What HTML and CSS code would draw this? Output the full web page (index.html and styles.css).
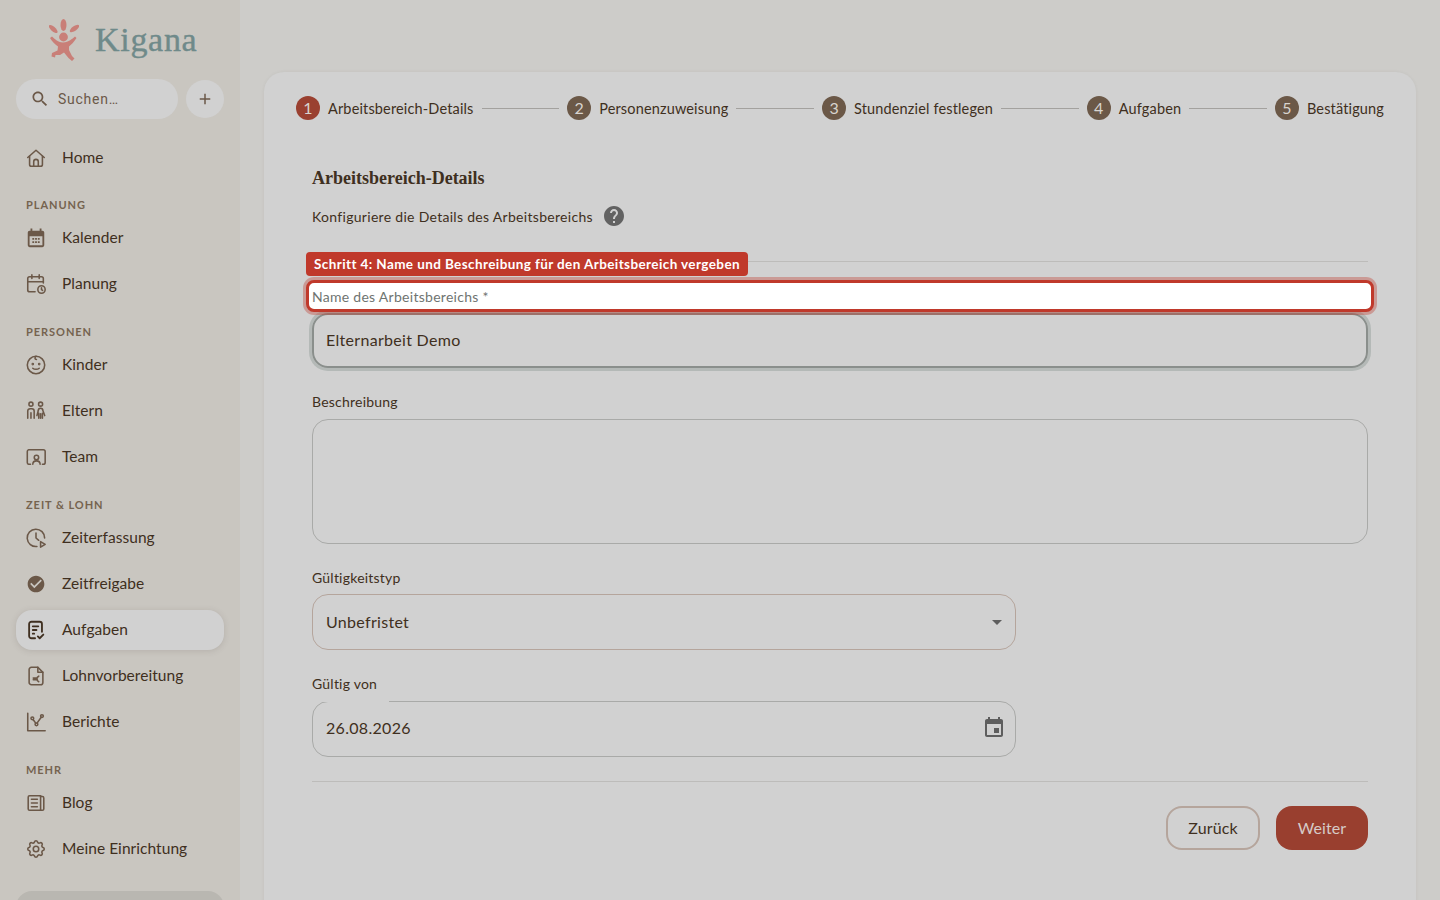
FILE: index.html
```html
<!DOCTYPE html>
<html lang="de">
<head>
<meta charset="utf-8">
<title>Kigana</title>
<link rel="stylesheet" href="styles.css">
</head>
<body>
<div class="app">
  <aside class="sidebar">
    <div class="brand">
      <svg class="brand-mark" viewBox="0 0 30 42" fill="#c97f78">
        <ellipse cx="14.500" cy="6" rx="3" ry="6"/>
        <ellipse cx="4.200" cy="10" rx="2.300" ry="5.500" transform="rotate(-48 4.200 10)"/>
        <ellipse cx="25.500" cy="9.500" rx="2.300" ry="5.500" transform="rotate(55 25.500 9.500)"/>
        <circle cx="14.500" cy="18" r="4.400"/>
        <path d="M1 19 3 17.500 C6 20 8 23 14 23.500 C20 23 23 20 26 17.500 L27.500 19 C25 23 22 26 20 27.500 L20 31 L23 37 L25.500 39.500 L23 42 L19.500 39 L15 33.500 L11 36 L6.500 36 L6 38.500 L2.500 37.500 L3 34 L8.500 31.500 L9 27.500 C6 25.500 3 22.500 1 19Z"/>
      </svg>
      <span class="brand-name">Kigana</span>
    </div>
    <div class="search-row">
      <div class="search">
        <svg class="search-icon" viewBox="0 0 24 24"><path d="M15.5 14h-.79l-.28-.27C15.41 12.59 16 11.11 16 9.5 16 5.91 13.09 3 9.5 3S3 5.91 3 9.5 5.91 16 9.5 16c1.61 0 3.09-.59 4.23-1.57l.27.28v.79l5 4.99L20.49 19l-4.99-5zm-6 0C7.01 14 5 11.99 5 9.5S7.01 5 9.5 5 14 7.01 14 9.5 11.99 14 9.5 14z"/></svg>
        <span class="search-text">Suchen…</span>
      </div>
      <button class="add-btn" type="button"><svg viewBox="0 0 24 24"><path d="M19 13h-6v6h-2v-6H5v-2h6V5h2v6h6v2z"/></svg></button>
    </div>
    <nav class="nav">
      <a class="nav-item"><svg class="nav-icon line" viewBox="0 0 24 24"><path d="M3 11.5 12 3.5l9 8"/><path d="M5 10v9a2 2 0 0 0 2 2h10a2 2 0 0 0 2-2v-9"/><path d="M9.5 21v-5a2.5 2.5 0 0 1 5 0v5"/></svg><span>Home</span></a>

      <div class="nav-label first">PLANUNG</div>
      <a class="nav-item"><svg class="nav-icon" viewBox="0 0 24 24"><path d="M6 1.5h2V4h8V1.5h2V4h1a2 2 0 0 1 2 2v14a2 2 0 0 1-2 2H5a2 2 0 0 1-2-2V6a2 2 0 0 1 2-2h1zM5 10v10h14V10zM8 12h2v2H8zm3 0h2v2h-2zm3 0h2v2h-2zm-6 3.5h2v2H8zm3 0h2v2h-2zm3 0h2v2h-2z" fill-rule="evenodd"/></svg><span>Kalender</span></a>
      <a class="nav-item"><svg class="nav-icon line" viewBox="0 0 24 24"><path d="M11 20.500H5a2 2 0 0 1-2-2V6a2 2 0 0 1 2-2h13a2 2 0 0 1 2 2v5"/><path d="M7.500 2v4M15.500 2v4M3 9.500h17"/><circle cx="18" cy="18" r="4"/><path d="M18 16v2.200l1.200.8"/></svg><span>Planung</span></a>

      <div class="nav-label">PERSONEN</div>
      <a class="nav-item"><svg class="nav-icon line" viewBox="0 0 24 24"><circle cx="12" cy="12" r="9.500"/><path d="M8.500 15.500c1.800 1.600 5.200 1.600 7 0M12 2.500c-1.500 1.500-1.500 3.500.5 3.500"/><circle cx="8.500" cy="11" r=".6"/><circle cx="15.500" cy="11" r=".6"/></svg><span>Kinder</span></a>
      <a class="nav-item"><svg class="nav-icon line" viewBox="0 0 24 24"><circle cx="6.500" cy="4.500" r="2.200"/><circle cx="17" cy="4.500" r="2.200"/><path d="M3 20v-8a2.500 2.500 0 0 1 2.500-2.500h2A2.500 2.500 0 0 1 10 12v8M6.500 14v6M13 17l1.500-5.500a2.500 2.500 0 0 1 5 0L21.500 17M15 14.500V20M19 14.500V20M17 15v5"/></svg><span>Eltern</span></a>
      <a class="nav-item"><svg class="nav-icon line" viewBox="0 0 24 24"><path d="M6 20H4a2 2 0 0 1-1.500-2V6A2 2 0 0 1 4 4h16a2 2 0 0 1 2 2v12a2 2 0 0 1-2 2h-1"/><circle cx="12.500" cy="12.500" r="2.400"/><path d="M8.500 20c0-2.200 1.800-3.800 4-3.800s4 1.600 4 3.800"/></svg><span>Team</span></a>

      <div class="nav-label">ZEIT &amp; LOHN</div>
      <a class="nav-item"><svg class="nav-icon line" viewBox="0 0 24 24"><path d="M13 21.300A9.500 9.500 0 1 1 21.400 12"/><path d="M12 6.500V12l3 2.500"/><path d="M17 16v6l5-3z"/></svg><span>Zeiterfassung</span></a>
      <a class="nav-item"><svg class="nav-icon" viewBox="-1.200 -1.200 26.400 26.400"><path d="M12 2C6.480 2 2 6.480 2 12s4.480 10 10 10 10-4.480 10-10S17.520 2 12 2zm-2 15l-5-5 1.410-1.410L10 14.170l7.590-7.590L19 8l-9 9z"/></svg><span>Zeitfreigabe</span></a>
      <a class="nav-item active"><svg class="nav-icon line dark" viewBox="0 0 24 24"><path d="M11 21H7a2.500 2.500 0 0 1-2.500-2.500v-13A2.500 2.500 0 0 1 7 3h9a2.500 2.500 0 0 1 2.500 2.500V14"/><path d="M8.500 8h6M8.500 12h4M8.500 16h1.500M14 19l2 2 4-4"/></svg><span>Aufgaben</span></a>
      <a class="nav-item"><svg class="nav-icon line" viewBox="0 0 24 24"><path d="M14 2.500H7A2.500 2.500 0 0 0 4.500 5v14A2.500 2.500 0 0 0 7 21.500h10a2.500 2.500 0 0 0 2.500-2.500V8z"/><path d="M14 2.500V8h5.500"/><path d="M15 12.200a3.300 3.300 0 0 0 0 6M9 14.300h4.500M9 16h4.500"/></svg><span>Lohnvorbereitung</span></a>
      <a class="nav-item"><svg class="nav-icon line" viewBox="0 0 24 24"><path d="M3 2.500V21.500H22"/><circle cx="8" cy="8" r="1.500"/><circle cx="12.500" cy="14.500" r="1.500"/><circle cx="18.500" cy="5.500" r="1.500"/><path d="M9 9.500l2.500 3.500M13.300 13l4.400-6.200"/></svg><span>Berichte</span></a>

      <div class="nav-label">MEHR</div>
      <a class="nav-item"><svg class="nav-icon line" viewBox="0 0 24 24"><path d="M17 4H5a1.500 1.500 0 0 0-1.500 1.500v13A1.500 1.500 0 0 0 5 20h14a1.500 1.500 0 0 0 1.500-1.500v-12A1.500 1.500 0 0 0 19 5h-2z"/><path d="M17 4v16M7 8h6.500M7 12h6.500M7 16h6.500"/></svg><span>Blog</span></a>
      <a class="nav-item"><svg class="nav-icon line" viewBox="0 0 24 24"><path d="M10.325 4.317c.426-1.756 2.924-1.756 3.350 0a1.724 1.724 0 0 0 2.573 1.066c1.543-.94 3.310.826 2.370 2.370a1.724 1.724 0 0 0 1.065 2.572c1.756.426 1.756 2.924 0 3.350a1.724 1.724 0 0 0-1.066 2.573c.94 1.543-.826 3.310-2.370 2.370a1.724 1.724 0 0 0-2.572 1.065c-.426 1.756-2.924 1.756-3.350 0a1.724 1.724 0 0 0-2.573-1.066c-1.543.94-3.310-.826-2.370-2.370a1.724 1.724 0 0 0-1.065-2.572c-1.756-.426-1.756-2.924 0-3.350a1.724 1.724 0 0 0 1.066-2.573c-.94-1.543.826-3.310 2.370-2.370c1 .608 2.296.07 2.572-1.065z"/><circle cx="12" cy="12" r="3"/></svg><span>Meine Einrichtung</span></a>
    </nav>
    <div class="user-card"></div>
  </aside>

  <main class="main">
    <section class="card">
      <ol class="stepper">
        <li class="step"><span class="step-num current">1</span><span class="step-label">Arbeitsbereich-Details</span></li>
        <li class="step-line"></li>
        <li class="step"><span class="step-num">2</span><span class="step-label">Personenzuweisung</span></li>
        <li class="step-line"></li>
        <li class="step"><span class="step-num">3</span><span class="step-label">Stundenziel festlegen</span></li>
        <li class="step-line"></li>
        <li class="step"><span class="step-num">4</span><span class="step-label">Aufgaben</span></li>
        <li class="step-line"></li>
        <li class="step"><span class="step-num">5</span><span class="step-label">Bestätigung</span></li>
      </ol>

      <form class="form">
        <h2 class="form-title">Arbeitsbereich-Details</h2>
        <div class="form-desc">
          <span>Konfiguriere die Details des Arbeitsbereichs</span>
          <svg class="help" viewBox="0 0 24 24"><path d="M12 2C6.480 2 2 6.480 2 12s4.480 10 10 10 10-4.480 10-10S17.520 2 12 2zm1 17h-2v-2h2v2zm2.070-7.750l-.9.920C13.450 12.900 13 13.500 13 15h-2v-.5c0-1.100.450-2.100 1.170-2.830l1.240-1.260c.370-.360.590-.860.590-1.410 0-1.100-.9-2-2-2s-2 .9-2 2H8c0-2.210 1.790-4 4-4s4 1.790 4 4c0 .880-.360 1.680-.930 2.250z"/></svg>
        </div>
        <div class="rule"></div>

        <div class="tour-field">
          <span class="tour-tag">Schritt 4: Name und Beschreibung für den Arbeitsbereich vergeben</span>
          <label class="tour-label">Name des Arbeitsbereichs *</label>
        </div>
        <div class="input focused">Elternarbeit Demo</div>

        <label class="label desc-label">Beschreibung</label>
        <div class="textarea"></div>

        <label class="label type-label">Gültigkeitstyp</label>
        <div class="input half select">
          <span>Unbefristet</span>
          <span class="caret"></span>
        </div>

        <label class="label date-label">Gültig von</label>
        <div class="input half date">
          <span class="notch"></span>
          <span>26.08.2026</span>
          <svg class="date-icon" viewBox="0 0 24 24"><path d="M17 12h-5v5h5v-5zM16 1v2H8V1H6v2H5c-1.110 0-1.990.9-1.990 2L3 19c0 1.100.890 2 2 2h14c1.100 0 2-.9 2-2V5c0-1.100-.9-2-2-2h-1V1h-2zm3 18H5V8h14v11z"/></svg>
        </div>

        <div class="rule footer-rule"></div>
        <div class="actions">
          <button class="btn ghost" type="button">Zurück</button>
          <button class="btn primary" type="button">Weiter</button>
        </div>
      </form>
    </section>
  </main>
</div>
</body>
</html>
```

FILE: styles.css
```css
* { box-sizing: border-box; }
html, body { margin: 0; height: 100%; overflow: hidden; }
body { background: #cdccc9; color: #3f2f20; font-family: "Lato", "Noto Sans", sans-serif; }
.app { display: flex; height: 900px; overflow: hidden; }

.sidebar { width: 240px; flex: none; background: #c9c6c0; padding: 0 16px; }
.brand { height: 79px; display: flex; align-items: center; padding-left: 33px; gap: 16px; }
.brand-mark { width: 30px; height: 42px; flex: none; }
.brand-name { font-family: "Liberation Serif", serif; font-size: 34px; color: #6f8a8a; letter-spacing: .7px; font-weight: 400; -webkit-text-stroke: .4px #6f8a8a; }
.search-row { display: flex; align-items: center; gap: 8px; }
.search { flex: 1; height: 40px; border-radius: 20px; background: #d1d1d1; display: flex; align-items: center; padding-left: 14px; gap: 8px; }
.search-icon { width: 20px; height: 20px; fill: #6b5848; }
.search-text { font-size: 14px; color: #6b5848; font-family: "Roboto", sans-serif; letter-spacing: .75px; }
.add-btn { width: 38px; height: 38px; border-radius: 50%; background: #d1d1d1; border: 0; padding: 0; display: flex; align-items: center; justify-content: center; }
.add-btn svg { width: 18px; height: 18px; fill: #6b5848; }

.nav { display: flex; flex-direction: column; gap: 6px; margin-top: 19px; }
.nav-item { height: 40px; display: flex; align-items: center; border-radius: 16px; padding-left: 9px; gap: 15px; font-size: 15.5px; color: #3f2f20; letter-spacing: .05px; }
.nav-item span { margin-top: -3px; }
.nav-item.active { background: #d1d1d1; box-shadow: 0 1px 6px rgba(90, 80, 70, .18); }
.nav-icon { width: 22px; height: 22px; flex: none; fill: #6b5848; }
.nav-icon.line { fill: none; stroke: #6b5848; stroke-width: 1.7; stroke-linecap: round; stroke-linejoin: round; }
.nav-icon.dark { stroke: #3f2f20; stroke-width: 2; }
.nav-label { height: 17px; line-height: 16px; margin-top: 14px; margin-bottom: -2px; padding-left: 10px; font-size: 11px; font-weight: 700; letter-spacing: .95px; color: #75634f; }
.nav-label.first { margin-top: 13px; }
.user-card { height: 60px; margin-top: 22px; border-radius: 16px; background: #b9b7b1; }

.main { flex: 1; padding: 72px 24px 0; min-width: 0; }
.card { height: 860px; background: #d1d1d1; border-radius: 20px; padding: 24px 32px; box-shadow: 0 0 3px rgba(120, 115, 105, .12); }
.stepper { list-style: none; margin: 0; padding: 0; display: flex; align-items: center; height: 24px; }
.step { display: flex; align-items: center; gap: 8px; flex: none; }
.step-num { width: 24px; height: 24px; border-radius: 50%; background: #6b5847; color: #d8d4cf; font-size: 16px; padding-bottom: 2px; display: flex; align-items: center; justify-content: center; }
.step-num.current { background: #9a4030; }
.step-label { font-size: 14.5px; color: #3f2f20; letter-spacing: .15px; }
.step-line { flex: 1; height: 1px; background: #a3a19e; margin: 0 8px; }

.form { padding: 0 16px; }
.form-title { margin: 46px 0 0; height: 24px; line-height: 24px; font-family: "Liberation Serif", serif; font-size: 18px; font-weight: 700; color: #3f2f20; }
.form-desc { display: flex; align-items: center; gap: 9px; height: 24px; margin-top: 14px; font-size: 14px; letter-spacing: .3px; }
.help { width: 24px; height: 24px; fill: #626262; }
.rule { height: 1px; background: #bdbcba; margin-top: 33px; }

.tour-field { position: relative; margin: 18px -6px 0; height: 32px; background: #fff; border: 3px solid #c0392b; border-radius: 8px; box-shadow: 0 0 0 3px rgba(192, 57, 43, .36); display: flex; align-items: center; padding-left: 3px; z-index: 2; }
.tour-label { font-size: 14px; color: #6f7471; letter-spacing: .28px; }
.tour-tag { position: absolute; left: -3px; top: -31px; height: 24px; line-height: 24px; padding: 0 8px; border-radius: 4px; background: #c0392b; color: #fff; font-size: 13.5px; font-weight: 700; letter-spacing: .4px; white-space: nowrap; }

.input { height: 56px; border: 1px solid #a9aaa8; border-radius: 16px; display: flex; align-items: center; padding: 0 13px 2px; font-size: 16px; letter-spacing: .3px; color: #3f2f20; }
.input.focused { height: 55px; margin-top: 1px; border: 2px solid #8a8f8c; box-shadow: 0 0 0 3px #b4b9b7; padding-left: 12px; }
.label { display: block; font-size: 14px; line-height: 18px; height: 18px; letter-spacing: .22px; color: #3f2f20; }
.desc-label { margin-top: 25px; }
.textarea { height: 125px; margin-top: 8px; border: 1px solid #a9aaa8; border-radius: 16px; }
.type-label { margin-top: 25px; }
.half { width: 704px; margin-top: 7px; justify-content: space-between; }
.select { border-color: #b5a59c; padding-right: 13px; }
.caret { width: 0; height: 0; margin-top: 2px; border-left: 5px solid transparent; border-right: 5px solid transparent; border-top: 5px solid #5e5e5e; }
.date-label { margin-top: 25px; }
.date { margin-top: 8px; position: relative; padding-right: 9px; padding-bottom: 3px; }
.notch { position: absolute; left: 8px; top: -1px; width: 68px; height: 1px; background: #d1d1d1; }
.date-icon { width: 24px; height: 24px; fill: #5e5e5e; }

.footer-rule { margin-top: 24px; }
.actions { display: flex; justify-content: flex-end; gap: 16px; margin-top: 24px; }
.btn { height: 44px; border-radius: 16px; font-family: "Lato", sans-serif; font-size: 16px; letter-spacing: .1px; padding-bottom: 3px; }
.ghost { width: 94px; background: transparent; border: 2px solid #b5a59c; color: #3f2f20; }
.primary { width: 92px; background: #993f2f; border: 0; color: #d6cbc7; }
```
